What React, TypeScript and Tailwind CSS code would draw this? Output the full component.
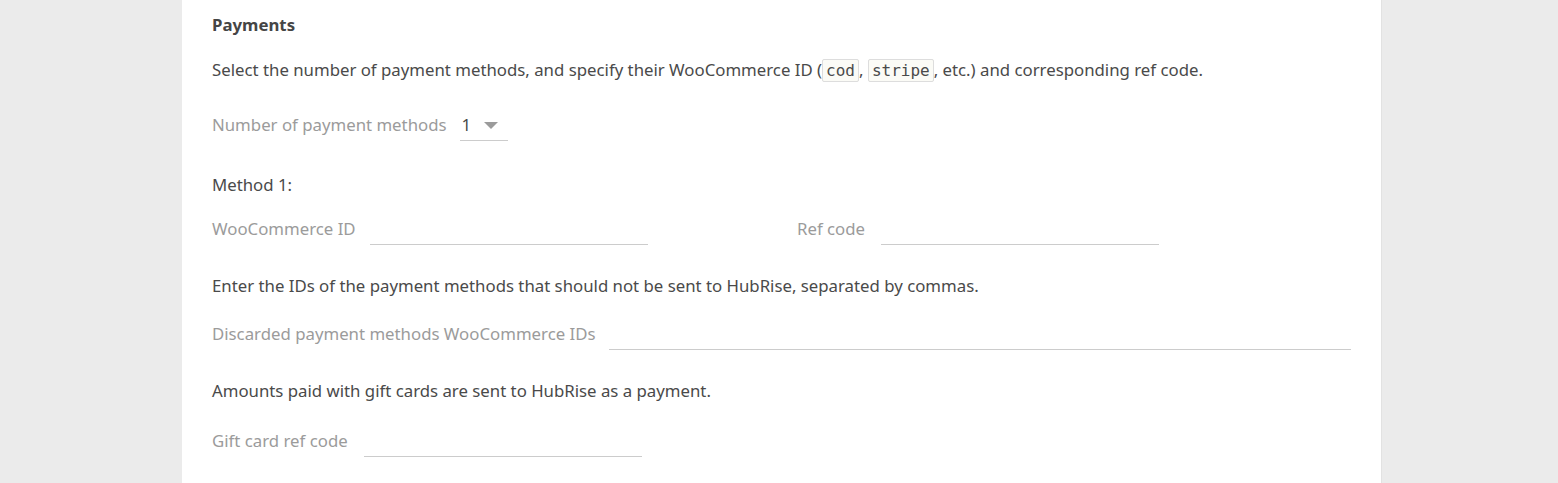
import React from "react";

const Field: React.FC<{ label: string; inputClass: string }> = ({ label, inputClass }) => (
  <div className="flex items-start">
    <span className="text-[#9b9b9b] leading-[24px] whitespace-nowrap">{label}</span>
    <div className={`border-b border-[#cccccc] h-[28px] ${inputClass}`} />
  </div>
);

const Code: React.FC<{ children: React.ReactNode }> = ({ children }) => (
  <code className="font-['DejaVu_Sans_Mono',monospace] text-[16px] px-[3px] py-[1px] border border-[#dddddd] bg-[#fbfbf6] text-[#4a4a4a] rounded-[2px]">
    {children}
  </code>
);

export default function App() {
  return (
    <div className="min-h-[483px] bg-[#ebebeb] pl-[182px] font-['Noto_Sans',sans-serif] text-[16.8px] text-[#4a4a4a]">
      <div className="w-[1200px] min-h-[483px] bg-white border-r border-[#e2e2e2] px-[30px] pt-[13px] pb-[24px]">
        <h3 className="font-bold text-[#454545] leading-[24px]">Payments</h3>

        <p className="mt-[21px] leading-[24px]">
          Select the number of payment methods, and specify their WooCommerce ID (<Code>cod</Code>,{" "}
          <Code>stripe</Code>, etc.) and corresponding ref code.
        </p>

        <div className="mt-[30px] flex items-start">
          <span className="text-[#9b9b9b] leading-[24px]">Number of payment methods</span>
          <div className="ml-[13px] w-[48px] h-[28px] border-b border-[#cccccc] flex items-start justify-between pl-[2px] pr-[10px]">
            <span className="text-[#4a4a4a] leading-[24px]">1</span>
            <svg className="mt-[9px]" width="14" height="8" viewBox="0 0 14 8">
              <path d="M0 0 L14 0 L7 7 Z" fill="#9b9b9b" />
            </svg>
          </div>
        </div>

        <p className="mt-[32px] leading-[24px]">Method 1:</p>

        <div className="mt-[20px] grid grid-cols-[585px_1fr]">
          <Field label="WooCommerce ID" inputClass="ml-[14px] w-[278px]" />
          <Field label="Ref code" inputClass="ml-[16px] w-[278px]" />
        </div>

        <p className="mt-[29px] leading-[24px]">
          Enter the IDs of the payment methods that should not be sent to HubRise, separated by commas.
        </p>

        <div className="mt-[24px]">
          <Field label="Discarded payment methods WooCommerce IDs" inputClass="ml-[13px] flex-1" />
        </div>

        <p className="mt-[29px] leading-[24px]">Amounts paid with gift cards are sent to HubRise as a payment.</p>

        <div className="mt-[26px]">
          <Field label="Gift card ref code" inputClass="ml-[16px] w-[278px]" />
        </div>
      </div>
    </div>
  );
}
